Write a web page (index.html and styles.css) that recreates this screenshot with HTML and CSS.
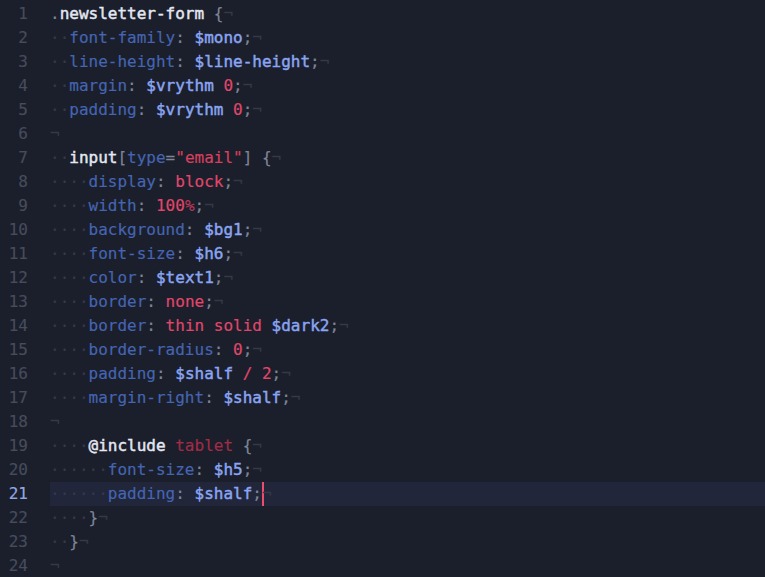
FILE: index.html
```html
<!DOCTYPE html>
<html>
<head>
<meta charset="utf-8">
<link rel="stylesheet" href="styles.css">
</head>
<body>
<div class="editor">
  <div class="gutter">
    <div class="ln">1</div><div class="ln">2</div><div class="ln">3</div><div class="ln">4</div><div class="ln">5</div><div class="ln">6</div><div class="ln">7</div><div class="ln">8</div><div class="ln">9</div><div class="ln">10</div><div class="ln">11</div><div class="ln">12</div><div class="ln">13</div><div class="ln">14</div><div class="ln">15</div><div class="ln">16</div><div class="ln">17</div><div class="ln">18</div><div class="ln">19</div><div class="ln">20</div><div class="ln cur">21</div><div class="ln">22</div><div class="ln">23</div><div class="ln">24</div>
  </div>
  <div class="code">
<div class="line"><span class="pn">.</span><span class="sel">newsletter-form</span> <span class="pn">{</span><span class="inv">¬</span></div>
<div class="line"><span class="inv">··</span><span class="prop">font-family</span><span class="pn">:</span> <span class="var">$mono</span><span class="pn">;</span><span class="inv">¬</span></div>
<div class="line"><span class="inv">··</span><span class="prop">line-height</span><span class="pn">:</span> <span class="var">$line-height</span><span class="pn">;</span><span class="inv">¬</span></div>
<div class="line"><span class="inv">··</span><span class="prop">margin</span><span class="pn">:</span> <span class="var">$vrythm</span> <span class="num">0</span><span class="pn">;</span><span class="inv">¬</span></div>
<div class="line"><span class="inv">··</span><span class="prop">padding</span><span class="pn">:</span> <span class="var">$vrythm</span> <span class="num">0</span><span class="pn">;</span><span class="inv">¬</span></div>
<div class="line"><span class="inv">¬</span></div>
<div class="line"><span class="inv">··</span><span class="sel">input</span><span class="pn">[</span><span class="prop">type</span><span class="pn">=</span><span class="str">"email"</span><span class="pn">]</span> <span class="pn">{</span><span class="inv">¬</span></div>
<div class="line"><span class="inv">····</span><span class="prop">display</span><span class="pn">:</span> <span class="num">block</span><span class="pn">;</span><span class="inv">¬</span></div>
<div class="line"><span class="inv">····</span><span class="prop">width</span><span class="pn">:</span> <span class="num">100</span><span class="unit">%</span><span class="pn">;</span><span class="inv">¬</span></div>
<div class="line"><span class="inv">····</span><span class="prop">background</span><span class="pn">:</span> <span class="var">$bg1</span><span class="pn">;</span><span class="inv">¬</span></div>
<div class="line"><span class="inv">····</span><span class="prop">font-size</span><span class="pn">:</span> <span class="var">$h6</span><span class="pn">;</span><span class="inv">¬</span></div>
<div class="line"><span class="inv">····</span><span class="prop">color</span><span class="pn">:</span> <span class="var">$text1</span><span class="pn">;</span><span class="inv">¬</span></div>
<div class="line"><span class="inv">····</span><span class="prop">border</span><span class="pn">:</span> <span class="num">none</span><span class="pn">;</span><span class="inv">¬</span></div>
<div class="line"><span class="inv">····</span><span class="prop">border</span><span class="pn">:</span> <span class="num">thin</span> <span class="num">solid</span> <span class="var">$dark2</span><span class="pn">;</span><span class="inv">¬</span></div>
<div class="line"><span class="inv">····</span><span class="prop">border-radius</span><span class="pn">:</span> <span class="num">0</span><span class="pn">;</span><span class="inv">¬</span></div>
<div class="line"><span class="inv">····</span><span class="prop">padding</span><span class="pn">:</span> <span class="var">$shalf</span> <span class="num">/</span> <span class="num">2</span><span class="pn">;</span><span class="inv">¬</span></div>
<div class="line"><span class="inv">····</span><span class="prop">margin-right</span><span class="pn">:</span> <span class="var">$shalf</span><span class="pn">;</span><span class="inv">¬</span></div>
<div class="line"><span class="inv">¬</span></div>
<div class="line"><span class="inv">····</span><span class="sel">@include</span> <span class="mix">tablet</span> <span class="pn">{</span><span class="inv">¬</span></div>
<div class="line"><span class="inv">······</span><span class="prop">font-size</span><span class="pn">:</span> <span class="var">$h5</span><span class="pn">;</span><span class="inv">¬</span></div>
<div class="line cur"><span class="inv">······</span><span class="prop">padding</span><span class="pn">:</span> <span class="var">$shalf</span><span class="pn">;</span><span class="caret"></span><span class="inv">¬</span></div>
<div class="line"><span class="inv">····</span><span class="pn">}</span><span class="inv">¬</span></div>
<div class="line"><span class="inv">··</span><span class="pn">}</span><span class="inv">¬</span></div>
<div class="line"><span class="inv">¬</span></div>
  </div>
</div>
</body>
</html>
```
FILE: styles.css
```css
html, body {
  margin: 0;
  padding: 0;
  background: #1b1f2b;
}
.editor {
  display: flex;
  width: 765px;
  height: 577px;
  overflow: hidden;
  padding-top: 2px;
  box-sizing: border-box;
  font-family: "DejaVu Sans Mono", monospace;
  font-size: 16px;
  line-height: 24px;
  -webkit-text-stroke: 0.15px currentColor;
}
.gutter {
  width: 28px;
  padding-right: 22px;
  text-align: right;
  color: #464c5c;
  flex: none;
}
.ln {
  height: 24px;
}
.ln.cur {
  color: #93a8e2;
}
.code {
  flex: 1;
}
.line {
  height: 24px;
  white-space: pre;
}
.line.cur {
  background: #21263a;
}
.inv { color: #333949; }
.pn { color: #7e8597; }
.sel { color: #e4e8f2; -webkit-text-stroke: 0.45px currentColor; }
.prop { color: #4565b3; }
.var { color: #8aa5f2; -webkit-text-stroke: 0.45px currentColor; }
.num { color: #e2476b; }
.unit { color: #b83a5a; }
.str { color: #d9405f; }
.mix { color: #a12c47; }
.caret {
  display: inline-block;
  width: 2px;
  height: 24px;
  margin-right: -2px;
  vertical-align: top;
  background: #ec4c6f;
  -webkit-text-stroke: 0;
}
```
